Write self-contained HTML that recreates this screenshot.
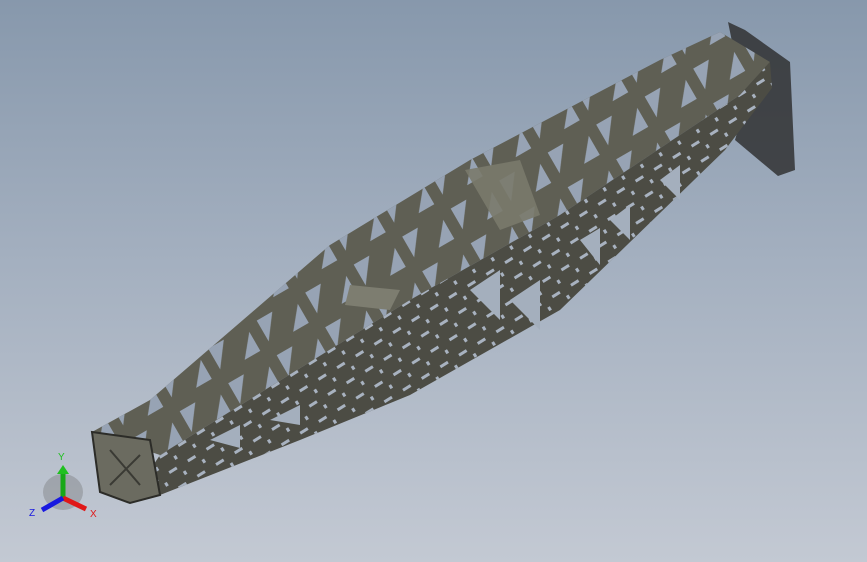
<!DOCTYPE html>
<html><head><style>
html,body{margin:0;padding:0;width:867px;height:562px;overflow:hidden}
body{background:linear-gradient(180deg,#8798ac 0%,#a3afbf 45%,#c3c9d3 100%)}
svg{position:absolute;left:0;top:0}
</style></head><body>
<svg width="867" height="562" viewBox="0 0 867 562">
<defs>
<pattern id="tr" width="56" height="40" patternUnits="userSpaceOnUse" patternTransform="rotate(-30)">
<polygon points="6,6 24,6 6,30" fill="#97a3b4"/>
<polygon points="32,34 50,34 50,12" fill="#97a3b4"/>
</pattern>
<pattern id="sl" width="22" height="18" patternUnits="userSpaceOnUse" patternTransform="rotate(-32)">
<rect x="3" y="3" width="9" height="3" fill="#a8b2c0"/>
<rect x="15" y="11" width="3" height="4" fill="#a8b2c0"/>
</pattern>
</defs>
<polygon points="728,22 745,30 790,62 795,170 778,176 735,140 745,105" fill="#2a2a2a" opacity="0.8"/>
<polygon points="92,432 150,400 330,245 470,160 660,60 720,32 770,62 740,95 560,215 410,300 160,455" fill="#5f5f54"/>
<polygon points="92,432 150,400 330,245 470,160 660,60 720,32 770,62 740,95 560,215 410,300 160,455" fill="url(#tr)"/>
<polygon points="160,455 410,300 560,215 740,95 770,62 772,88 725,150 560,310 410,395 300,440 160,495 130,500" fill="#4c4c44"/>
<polygon points="160,455 410,300 560,215 740,95 770,62 772,88 725,150 560,310 410,395 300,440 160,495 130,500" fill="url(#sl)"/>
<g fill="#a4afbd">
<polygon points="470,290 500,270 500,320"/><polygon points="510,300 540,280 540,330"/>
<polygon points="580,240 600,228 600,265"/><polygon points="610,220 630,205 630,240"/>
<polygon points="660,180 680,165 680,200"/>
<polygon points="270,420 300,405 300,425"/><polygon points="210,440 240,425 240,448"/>
</g>
<polygon points="465,170 520,160 540,215 500,230" fill="#7a7a6c" opacity="0.9"/>
<polygon points="350,285 400,290 390,310 345,305" fill="#7d7d70"/>
<polygon points="92,432 150,440 160,495 130,503 100,492" fill="#6b6b60" stroke="#2c2c28" stroke-width="2"/>
<line x1="110" y1="450" x2="140" y2="485" stroke="#3a3a34" stroke-width="2"/>
<line x1="140" y1="455" x2="110" y2="485" stroke="#3a3a34" stroke-width="2"/>
<g>
<ellipse cx="63" cy="492" rx="20" ry="18" fill="#6d6d6d" opacity="0.35"/>
<line x1="63" y1="498" x2="63" y2="473" stroke="#18a818" stroke-width="5"/>
<polygon points="57,474 69,474 63,465" fill="#20c020"/>
<line x1="63" y1="498" x2="86" y2="509" stroke="#e01818" stroke-width="5"/>
<line x1="63" y1="498" x2="42" y2="510" stroke="#1818e0" stroke-width="5"/>
<text x="58" y="460" font-family="Liberation Sans,sans-serif" font-size="10" fill="#20c020">Y</text>
<text x="90" y="517" font-family="Liberation Sans,sans-serif" font-size="10" fill="#e01818">X</text>
<text x="29" y="516" font-family="Liberation Sans,sans-serif" font-size="10" fill="#1818e0">Z</text>
</g>
</svg>
</body></html>
